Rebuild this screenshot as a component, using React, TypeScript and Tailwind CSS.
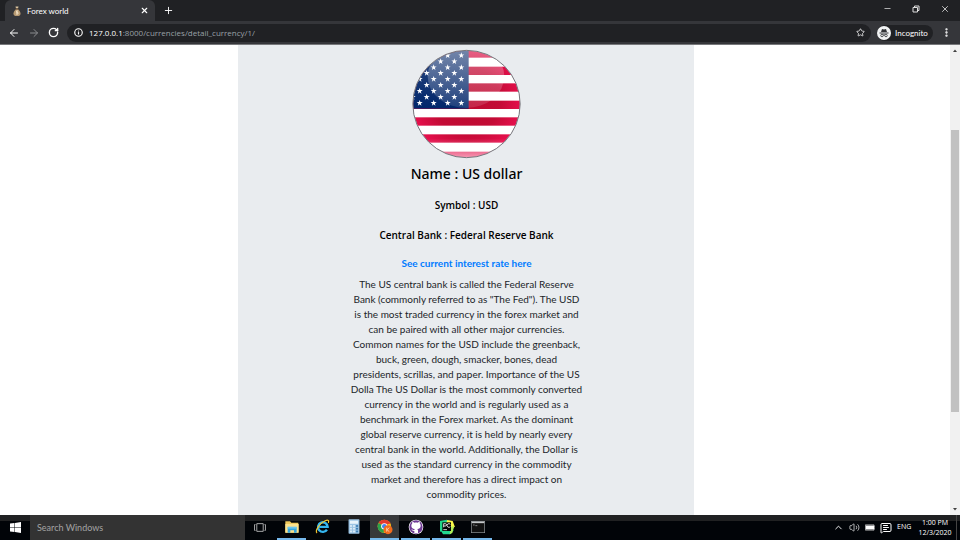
import React from "react";
import { ArrowLeft, ArrowRight, RotateCw, Info, Star, X, Plus, MoreVertical, Minus, ChevronUp, Volume2, MessageSquareText } from "lucide-react";

const starRows = [35, 53, 71, 88, 106, 124, 142, 160, 178];

const description = [
  "The US central bank is called the Federal Reserve",
  "Bank (commonly referred to as \"The Fed\"). The USD",
  "is the most traded currency in the forex market and",
  "can be paired with all other major currencies.",
  "Common names for the USD include the greenback,",
  "buck, green, dough, smacker, bones, dead",
  "presidents, scrillas, and paper. Importance of the US",
  "Dolla The US Dollar is the most commonly converted",
  "currency in the world and is regularly used as a",
  "benchmark in the Forex market. As the dominant",
  "global reserve currency, it is held by nearly every",
  "central bank in the world. Additionally, the Dollar is",
  "used as the standard currency in the commodity",
  "market and therefore has a direct impact on",
  "commodity prices.",
];

function Flag() {
  return (
    <svg viewBox="36 16 330 330" className="h-[110px] w-[110px]" role="img" aria-label="US flag">
      <defs>
        <clipPath id="disc"><circle cx="199.500" cy="181" r="160" /></clipPath>
        <linearGradient id="navy" x1="0" y1="0" x2="0" y2="1">
          <stop offset="0" stopColor="#2e4a80" /><stop offset="1" stopColor="#00266b" />
        </linearGradient>
        <radialGradient id="stripe" gradientUnits="userSpaceOnUse" cx="200" cy="170" r="165">
          <stop offset="0" stopColor="#bb0a2e" /><stop offset="0.6" stopColor="#c30b35" /><stop offset="1" stopColor="#e6104d" />
        </radialGradient>
        <linearGradient id="gloss" x1="0" y1="0" x2="0" y2="1">
          <stop offset="0" stopColor="#fff" stopOpacity="0.35" /><stop offset="1" stopColor="#fff" stopOpacity="0.12" />
        </linearGradient>
        <linearGradient id="foot" x1="0" y1="0" x2="0" y2="1">
          <stop offset="0" stopColor="#fff" stopOpacity="0" /><stop offset="1" stopColor="#fff" stopOpacity="0.6" />
        </linearGradient>
        <path id="star" d="M0-9 2.200-2.800 9-2.800 3.500 1.200 5.500 8 0 4-5.500 8-3.500 1.200-9-2.800-2.200-2.800Z" />
      </defs>
      <g clipPath="url(#disc)">
        <rect x="36" y="16" width="330" height="330" fill="#fff" />
        {[17, 69, 119, 171, 221, 272, 324].map((y) => (
          <rect key={y} x="36" y={y} width="330" height="25" fill="url(#stripe)" />
        ))}
        <rect x="36" y="16" width="170" height="179" fill="url(#navy)" />
        {starRows.map((y, i) =>
          (i % 2 ? [38, 80, 122, 163] : [59, 101, 143, 184]).map((x) => (
            <use key={`${x}-${y}`} href="#star" x={x} y={y} fill="#fff" />
          ))
        )}
        <ellipse cx="198" cy="98" rx="115" ry="95" fill="url(#gloss)" />
        <rect x="36" y="285" width="330" height="60" fill="url(#foot)" />
      </g>
      <circle cx="199.500" cy="181" r="161" fill="none" stroke="#77767c" strokeWidth="3" />
    </svg>
  );
}

function MoneyBag() {
  return (
    <svg viewBox="0 0 16 20" className="h-[10px] w-2">
      <path d="M5 1h6l-1 4H6z" fill="#d9c3a0" />
      <path d="M6 6h4c3 3 5 6 5 9 0 4-2 5-7 5s-7-1-7-5c0-3 2-6 5-9z" fill="#b79a73" />
      <path d="M5 5h6v2H5z" fill="#5a4028" />
      <path d="M10 10H7v3h3v3H6M8 9v8" fill="none" stroke="#f3e4c8" strokeWidth="1.500" />
    </svg>
  );
}

function Incognito() {
  return (
    <svg viewBox="0 0 28 28" className="h-[14px] w-[14px]">
      <circle cx="14" cy="14" r="14" fill="#f1f3f4" />
      <path d="M10 6l4 1 4-1 2 6H8zM5 13h18v2H5z" fill="#303236" />
      <g fill="none" stroke="#303236" strokeWidth="1.600"><circle cx="10" cy="19" r="2.500" /><circle cx="18" cy="19" r="2.500" /><path d="M12 18q2-1 4 0" /></g>
    </svg>
  );
}

function Browser() {
  return (
    <header className="shrink-0 border-b border-[#77787b] bg-[#35363a] text-white">
      <div className="flex h-[21px] items-end bg-[#202124]">
        <div className="ml-[5px] flex h-[21px] w-[150px] items-center rounded-t-md bg-[#35363a] pl-2 pr-1.5">
          <MoneyBag />
          <span className="ml-1.5 flex-1 text-[8px] leading-[12px]">Forex world</span>
          <button aria-label="Close tab"><X size={9} strokeWidth={3} /></button>
        </div>
        <button aria-label="New tab" className="ml-2 flex h-[21px] items-center"><Plus size={11} strokeWidth={2} /></button>
        <div className="ml-auto flex h-full items-center gap-5 pb-1 pr-2.5 text-[#dddddd]">
          <button aria-label="Minimize"><Minus size={9} /></button>
          <button aria-label="Restore">
            <svg viewBox="0 0 16 16" className="h-2 w-2" fill="none" stroke="currentColor" strokeWidth="2"><path d="M2 5h9v9H2zM5 5V2h9v9h-3" /></svg>
          </button>
          <button aria-label="Close window"><X size={10} /></button>
        </div>
      </div>
      <div className="flex h-[23px] items-center gap-2 px-2">
        <button aria-label="Back"><ArrowLeft size={12} /></button>
        <button aria-label="Forward" className="text-[#8b8c8f]"><ArrowRight size={12} /></button>
        <button aria-label="Reload"><RotateCw size={11} strokeWidth={3} /></button>
        <div className="flex h-[18px] flex-1 items-center rounded-full bg-[#202124] pl-[7px] pr-1.5">
          <Info size={9} strokeWidth={3} />
          <span className="ml-1.5 flex-1 font-['Open_Sans',sans-serif] text-[8px] leading-[12px] text-[#9aa0a6]"><span className="text-white">127.0.0.1</span>:8000/currencies/detail_currency/1/</span>
          <button aria-label="Bookmark"><Star size={9} /></button>
        </div>
        <div className="-ml-0.5 flex h-4 w-14 items-center gap-1 rounded-full bg-[#202124]">
          <Incognito />
          <span className="text-[8px] leading-[12px]">Incognito</span>
        </div>
        <button aria-label="Menu"><MoreVertical size={11} strokeWidth={3} /></button>
      </div>
    </header>
  );
}

function Scrollbar() {
  return (
    <div className="flex w-[10px] shrink-0 flex-col items-center bg-[#f1f1f1] py-1">
      <svg viewBox="0 0 8 8" className="h-1 w-1 shrink-0"><path d="M0 6 4 1 8 6z" fill="#404040" /></svg>
      <div className="grid w-2 flex-1 grid-rows-[77fr_283fr_95fr]">
        <div className="row-start-2 bg-[#c1c1c1]" />
      </div>
      <svg viewBox="0 0 8 8" className="h-1 w-1 shrink-0"><path d="M0 2 4 7 8 2z" fill="#404040" /></svg>
    </div>
  );
}

function ExplorerIcon() {
  return (
    <svg viewBox="0 0 42 42" className="h-[14px] w-[14px]">
      <path d="M1 4h14l4 4h21v30H1z" fill="#f0c95c" />
      <path d="M1 12h40v26H1z" fill="#fbe28f" />
      <path d="M8 22h27v16h-8v-7H16v7H8z" fill="#35a6dd" />
      <path d="M8 20h27v6H8z" fill="#6bc5ee" />
    </svg>
  );
}

function IeIcon() {
  return (
    <svg viewBox="0 0 44 44" className="h-[15px] w-[15px]" fill="none">
      <path d="M35 31a14 14 0 1 1 2-8H13" stroke="#35b6ee" strokeWidth="7" />
      <path d="M6 41C-2 36 14 12 30 5c9-4 12 0 9 7" stroke="#f4c62e" strokeWidth="3.500" />
    </svg>
  );
}

function CalcIcon() {
  return (
    <svg viewBox="0 0 34 44" className="h-[15px] w-3">
      <rect x="1" y="1" width="32" height="42" rx="2" fill="#9cc4e4" />
      <rect x="5" y="5" width="24" height="9" fill="#e8f4fb" />
      {[18, 26, 34].map((y) => [5, 14, 23].map((x) => (
        <rect key={`${x}-${y}`} x={x} y={y} width="6" height="5" fill={x === 23 ? "#3d7eb3" : "#dcecf7"} />
      )))}
    </svg>
  );
}

function ChromeIcon() {
  return (
    <svg viewBox="0 0 48 48" className="h-4 w-4">
      <circle cx="22" cy="22" r="20" fill="#fbc116" />
      <path d="M22 22 4.700 12A20 20 0 0 1 39.300 12z" fill="#e33b2e" />
      <path d="M22 22 4.700 12A20 20 0 0 0 20 42z" fill="#2ba24c" />
      <path d="M22 12h18" stroke="#e33b2e" strokeWidth="4" />
      <circle cx="22" cy="22" r="9.500" fill="#fff" />
      <circle cx="22" cy="22" r="7" fill="#4285f4" />
      <circle cx="33" cy="32" r="13.500" fill="#f26b1d" />
      <path d="M29 26v12M37 26l-7 6 7 6" fill="none" stroke="#fff0e0" strokeWidth="2" />
    </svg>
  );
}

function GithubIcon() {
  return (
    <svg viewBox="0 0 48 48" className="h-4 w-4">
      <circle cx="24" cy="24" r="22" fill="#fff" />
      <circle cx="24" cy="24" r="20" fill="#6e3a94" />
      <path d="M19 42v-6c-6 1-7-3-9-5 4-1 5 4 9 2l1-3c-7-1-10-4-10-10 0-3 1-5 3-7-1-2 0-4 0-5 3 0 5 2 6 3 3-1 7-1 10 0 1-1 3-3 6-3 0 1 1 3 0 5 2 2 3 4 3 7 0 6-3 9-10 10l2 4v8z" fill="#fff" />
    </svg>
  );
}

function PycharmIcon() {
  return (
    <svg viewBox="0 0 48 48" className="h-4 w-4">
      <path d="M3 6 24 2l5 9-16 25-10 2z" fill="#21d789" />
      <path d="m25 3 16 3 6 16-7 12-20-18z" fill="#fcf84a" />
      <path d="M3 31 35 22l9 12-10 12H12z" fill="#22d88f" />
      <path d="m35 24 10-3-5 21-8 4z" fill="#b4ef58" />
      <rect x="10" y="10" width="26" height="26" fill="#050505" />
      <path d="M14 25V14h5a3 3 0 0 1 0 7h-5M34 16a5.500 5.500 0 1 0 0 7M13 32h11" fill="none" stroke="#fff" strokeWidth="2.500" />
    </svg>
  );
}

function TerminalIcon() {
  return (
    <svg viewBox="0 0 42 36" className="h-3 w-[14px]">
      <rect x="1" y="1" width="40" height="34" fill="#111" stroke="#94989b" strokeWidth="2" />
      <path d="M2 4h38" stroke="#c5c8ca" strokeWidth="5" />
      <path d="M6 12h5M13 14h6" stroke="#bbb" strokeWidth="2" />
    </svg>
  );
}

const apps = [
  { name: "File Explorer", icon: <ExplorerIcon />, open: true, active: false },
  { name: "Internet Explorer", icon: <IeIcon />, open: false, active: false },
  { name: "Calculator", icon: <CalcIcon />, open: false, active: false },
  { name: "Chrome", icon: <ChromeIcon />, open: true, active: true },
  { name: "GitHub", icon: <GithubIcon />, open: true, active: false },
  { name: "PyCharm", icon: <PycharmIcon />, open: true, active: false },
  { name: "Command Prompt", icon: <TerminalIcon />, open: true, active: false },
];

function Taskbar() {
  return (
    <footer className="flex h-[25px] shrink-0 bg-linear-to-b from-[#202122] from-25% to-[#010408] to-25% text-white">
      <button aria-label="Start" className="flex w-[30px] items-center justify-center">
        <svg viewBox="0 0 22 22" className="h-[11px] w-[11px]" fill="#fff"><path d="M0 3l9-1v8H0zM10 2l12-2v10H10zM0 11h9v9l-9-1zM10 11h12v11l-12-2z" /></svg>
      </button>
      <input aria-label="Search Windows" placeholder="Search Windows" className="w-[215px] bg-[#333333] px-[7px] text-[9px] placeholder:text-[#a3a3a3]" />
      <button aria-label="Task View" className="flex w-[30px] items-center justify-center">
        <svg viewBox="0 0 36 28" className="h-[9px] w-3" fill="none" stroke="#ccc" strokeWidth="2.500"><path d="M8 2h20v24H8zM4 5H1v18h3M32 5h3v18h-3" /></svg>
      </button>
      <nav className="ml-0.5 flex gap-0.5">
        {apps.map((app) => (
          <button
            key={app.name}
            aria-label={app.name}
            className={`flex w-[29px] items-center justify-center border-b-2 ${app.open ? "border-[#76b9ed]" : "border-transparent"} ${app.active ? "bg-[#37393b]" : ""}`}
          >
            {app.icon}
          </button>
        ))}
      </nav>
      <div className="ml-auto flex items-center gap-[5px] pr-1">
        <ChevronUp size={11} />
        <Volume2 size={11} strokeWidth={1.5} />
        <svg viewBox="0 0 30 20" className="h-[7px] w-[10px]"><path d="M2 4h25v12H2z" fill="#fff" /><path d="M1 2h26v4h2v8h-2v4H1z" fill="none" stroke="#ddd" strokeWidth="2" /></svg>
        <MessageSquareText size={12} strokeWidth={2} />
        <span className="w-4 font-['Open_Sans',sans-serif] text-[7px]">ENG</span>
        <div className="flex w-[34px] flex-col text-center font-['Open_Sans',sans-serif] text-[7px] leading-[10px]">
          <span>1:00 PM</span>
          <span>12/3/2020</span>
        </div>
      </div>
      <div className="w-1 border-l border-[#444]" />
    </footer>
  );
}

export default function App() {
  return (
    <div className="flex h-screen flex-col overflow-hidden bg-white font-['Lato',sans-serif]">
      <Browser />
      <div className="flex min-h-0 flex-1">
        <main className="min-w-0 flex-1 overflow-hidden">
          <article className="ml-[25%] flex min-h-full w-[48%] flex-col items-center bg-[#e9ecef] pl-0.5 pt-1 text-center text-[#212529]">
            <Flag />
            <h1 className="font-['Noto_Sans',sans-serif] text-[14px] font-medium leading-[30px] text-black">Name : US dollar</h1>
            <h2 className="mt-[9px] font-['Open_Sans',sans-serif] text-[10px] font-semibold leading-[15px] text-black">Symbol : USD</h2>
            <h2 className="mt-[15px] font-['Open_Sans',sans-serif] text-[10px] font-semibold leading-[15px] text-black">Central Bank : Federal Reserve Bank</h2>
            <a href="#rate" className="mt-[13px] text-[10px] font-bold leading-[15px] text-[#007bff]">See current interest rate here</a>
            <p className="mt-1.5 flex flex-col text-[10px] leading-[15px]">
              {description.map((line) => <span key={line} className="whitespace-nowrap">{line} </span>)}
            </p>
          </article>
        </main>
        <Scrollbar />
      </div>
      <Taskbar />
    </div>
  );
}
